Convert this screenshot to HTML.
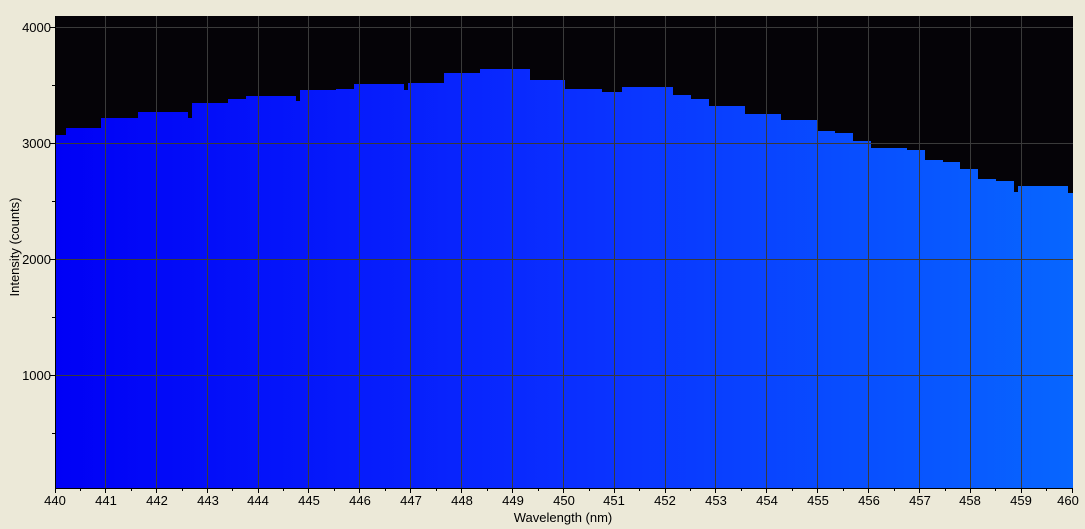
<!DOCTYPE html>
<html><head><style>
html,body{margin:0;padding:0;background:#ece9d8;}
svg{display:block;font-family:"Liberation Sans",sans-serif;}
</style></head><body>
<svg width="1085" height="529" viewBox="0 0 1085 529">
<defs><linearGradient id="g" x1="0" x2="1" y1="0" y2="0">
<stop offset="0" stop-color="#0000f6"/><stop offset="0.5" stop-color="#0a2eff"/><stop offset="1" stop-color="#0766ff"/></linearGradient></defs>
<rect x="55" y="16" width="1018" height="472" fill="#050307"/>
<path fill="url(#g)" d="M55,488 V135 H66 V128 H101 V118 H138 V112 H188 V118 H192 V103 H228 V99 H246 V96 H296 V101 H300 V90 H336 V89 H354 V84 H404 V90 H408 V83 H444 V73 H480 V69 H530 V80 H565 V89 H602 V92 H622 V87 H673 V95 H691 V99 H709 V106 H745 V114 H781 V120 H817 V131 H835 V133 H853 V141 H871 V148 H907 V150 H925 V160 H943 V162 H960 V169 H978 V179 H996 V181 H1014 V192 H1018 V186 H1068 V193 H1073 V488 Z"/>
<g stroke="#3a3a3a" stroke-width="1" fill="none">
<path d="M105.5,16V488 M156.5,16V488 M207.5,16V488 M258.5,16V488 M308.5,16V488 M359.5,16V488 M410.5,16V488 M461.5,16V488 M512.5,16V488 M563.5,16V488 M614.5,16V488 M665.5,16V488 M715.5,16V488 M766.5,16V488 M817.5,16V488 M868.5,16V488 M919.5,16V488 M970.5,16V488 M1021.5,16V488"/>
<path d="M55,27.5H1073 M55,143.5H1073 M55,259.5H1073 M55,375.5H1073"/>
</g>
<g stroke="#000" stroke-width="1" fill="none">
<path d="M55.5,16V488.5H1073"/>
<path d="M50,27.5H55 M50,143.5H55 M50,259.5H55 M50,375.5H55 M52,85.5H55 M52,201.5H55 M52,317.5H55 M52,433.5H55"/>
<path d="M55.5,488V493 M105.5,488V493 M156.5,488V493 M207.5,488V493 M258.5,488V493 M308.5,488V493 M359.5,488V493 M410.5,488V493 M461.5,488V493 M512.5,488V493 M563.5,488V493 M614.5,488V493 M665.5,488V493 M715.5,488V493 M766.5,488V493 M817.5,488V493 M868.5,488V493 M919.5,488V493 M970.5,488V493 M1021.5,488V493 M1072.5,488V493"/>
<path d="M80.5,488V491 M131.5,488V491 M182.5,488V491 M232.5,488V491 M283.5,488V491 M334.5,488V491 M385.5,488V491 M436.5,488V491 M487.5,488V491 M538.5,488V491 M589.5,488V491 M639.5,488V491 M690.5,488V491 M741.5,488V491 M792.5,488V491 M843.5,488V491 M894.5,488V491 M945.5,488V491 M995.5,488V491 M1046.5,488V491"/>
</g>
<g font-size="13" fill="#000" text-anchor="end">
<text x="51" y="32">4000</text><text x="51" y="148">3000</text><text x="51" y="264">2000</text><text x="51" y="380">1000</text>
</g>
<g font-size="13" fill="#000" text-anchor="middle">
<text x="55" y="505">440</text><text x="106" y="505">441</text><text x="157" y="505">442</text><text x="208" y="505">443</text><text x="258" y="505">444</text><text x="309" y="505">445</text><text x="360" y="505">446</text><text x="411" y="505">447</text><text x="462" y="505">448</text><text x="513" y="505">449</text><text x="564" y="505">450</text><text x="614" y="505">451</text><text x="665" y="505">452</text><text x="716" y="505">453</text><text x="767" y="505">454</text><text x="818" y="505">455</text><text x="869" y="505">456</text><text x="920" y="505">457</text><text x="970" y="505">458</text><text x="1021" y="505">459</text><text x="1068" y="505">460</text>
<text x="563" y="522">Wavelength (nm)</text>
<text transform="translate(19,247) rotate(-90)">Intensity (counts)</text>
</g>
</svg>
</body></html>
